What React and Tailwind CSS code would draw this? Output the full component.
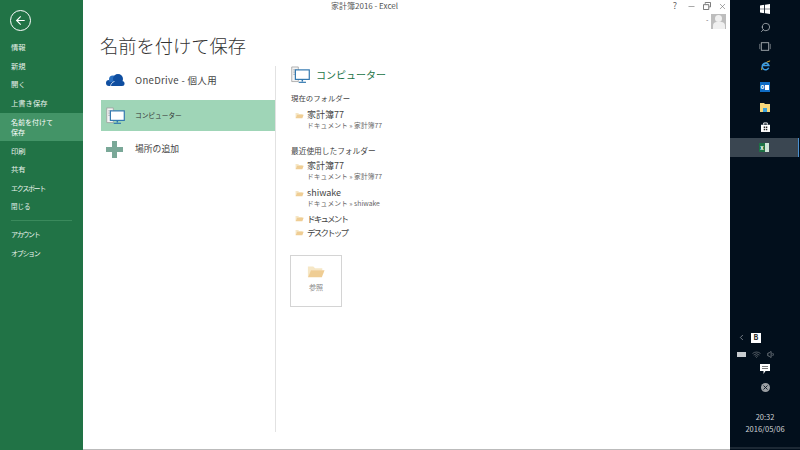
import { ArrowLeft, Search, X, Minus, ChevronLeft, Wifi, Volume1 } from "lucide-react";

const FONT = "font-['Noto_Sans_CJK_JP','Noto_Sans',sans-serif]";

const MENU_TOP = ["情報", "新規", "開く", "上書き保存"];
const KANA = "text-[7px] tracking-[-1.3px]";

function MenuItem({ children, className = "text-[7.3px]" }) {
  return (
    <div className={`flex h-[18.7px] items-center pl-[11px] text-[#e8f2ec] ${className}`}>
      {children}
    </div>
  );
}

function Folder({ className }) {
  return (
    <svg viewBox="0 0 20 16" className={className}>
      <path d="M1 14V2.500h6l2 2h8V7H5L1 14z" fill="#f6e7c6" />
      <path d="M1 14.500 4.500 6.500H19.500L16.500 14.500z" fill="#efcd94" />
    </svg>
  );
}

function Computer({ className }) {
  return (
    <svg viewBox="0 0 26 24" className={className}>
      <path d="M1 1h9v20H1z" fill="#f4f4f4" stroke="#9a9a9a" strokeWidth="1" />
      <path d="M3 5h5M3 8h5M3 11h5" stroke="#9a9a9a" strokeWidth="1" />
      <rect x="6" y="5" width="19" height="13" fill="#ffffff" stroke="#2f76ae" strokeWidth="1.6" />
      <path d="M15.500 18v3" stroke="#2f76ae" strokeWidth="2" />
      <path d="M10.500 22h10" stroke="#2f76ae" strokeWidth="1.6" />
    </svg>
  );
}

function RecentFolder({ name, path, nameClass = "text-[9px]", className = "" }) {
  return (
    <div className={`flex items-start gap-[3px] ${className}`}>
      <Folder className="mt-[3px] h-[7px] w-[9px] shrink-0" />
      <div>
        <div className={`leading-[12px] text-[#444] ${nameClass}`}>{name}</div>
        {path && <div className="text-[6.8px] leading-[9px] text-[#666]">{path}</div>}
      </div>
    </div>
  );
}

function Taskbar() {
  return (
    <div className="flex w-[70px] shrink-0 flex-col items-center bg-[#020f1c] text-white">
      <div className="flex w-full flex-col items-center">
        <svg viewBox="0 0 12 12" className="mt-[4px] h-[10px] w-[10px]">
          <path d="M0 1.700 5 1v4.600H0zM6 .8 12 0v5.600H6zM0 6.400h5V11l-5-.7zM6 6.400h6V12l-6-.8z" fill="#fff" />
        </svg>
        <Search className="mt-[8px] h-[11px] w-[11px] -scale-x-100 text-[#c8ccd0]" strokeWidth={1.5} />
        <svg viewBox="0 0 16 12" className="mt-[9px] h-[9px] w-[14px]">
          <rect x="3" y="1" width="10" height="10" fill="none" stroke="#c8ccd0" />
          <path d="M1 2.500v7M15 2.500v7" stroke="#8b9096" />
        </svg>
        <svg viewBox="0 0 12 12" className="mt-[9px] h-[11px] w-[11px]">
          <path d="M2 11C1 8 5 2.500 11 1" fill="none" stroke="#f2c230" strokeWidth="1" />
          <path d="M9.500 8.500A3.700 3.700 0 1 1 9.700 6H3" fill="none" stroke="#3c9ce0" strokeWidth="1.600" />
        </svg>
        <div className="mt-[11px] flex h-[10px] w-[10px] items-center bg-[#0f6cc4]">
          <div className="flex h-[10px] w-[5px] items-center justify-center text-[6px] font-bold leading-none">o</div>
          <div className="h-[5px] w-[4px] bg-white" />
        </div>
        <svg viewBox="0 0 10 9" className="mt-[11px] h-[9px] w-[10px]">
          <path d="M0 0h4l1 1h5v8H0z" fill="#f5d77c" />
          <path d="M3 5h4v4H3z" fill="#3aa0d8" />
        </svg>
        <svg viewBox="0 0 10 11" className="mt-[10px] h-[10px] w-[9px]">
          <path d="M0 3h10v8H0z" fill="#fff" />
          <path d="M3 3V1h4v2" fill="none" stroke="#fff" />
          <path d="M3 5h1.600v1.600H3zM5.400 5H7v1.600H5.400zM3 7.400h1.600V9H3zM5.400 7.400H7V9H5.400z" fill="#222" />
        </svg>
        <div className="mt-[6px] flex h-[19px] w-[69px] items-center justify-center self-start border-r border-r-[#4a90d0] bg-[#3a4651]">
          <div className="flex h-[9px] w-[10px] items-stretch">
            <div className="flex w-[6px] items-center justify-center bg-[#1e7145] text-[6px] font-bold leading-none">x</div>
            <div className="w-[4px] bg-[#cfe3d8]" />
          </div>
        </div>
      </div>
      <div className="flex-1" />
      <div className="flex w-full flex-col items-center pb-[13.5px]">
        <div className="flex w-full items-center gap-[5px] pl-[7px]">
          <ChevronLeft className="h-[9px] w-[9px] text-[#c8ccd0]" strokeWidth={1.5} />
          <div className="flex h-[10px] w-[10px] items-center justify-center bg-white text-[7px] font-bold leading-none text-[#222]">B</div>
        </div>
        <div className="mt-[7px] flex w-full items-center gap-[6px] pl-[7px]">
          <div className="h-[5px] w-[9px] bg-[#c8ccd0]" />
          <Wifi className="h-[9px] w-[9px] text-[#8b9096]" strokeWidth={1.5} />
          <Volume1 className="h-[9px] w-[9px] text-[#b5b9bd]" strokeWidth={1.5} />
        </div>
        <svg viewBox="0 0 10 11" className="mt-[5px] h-[11px] w-[10px]">
          <path d="M0 0h10v7H5.500L3.500 10V7H0z" fill="#fff" />
          <path d="M2 2.500h6M2 4.500h6" stroke="#444" strokeWidth=".7" />
        </svg>
        <div className="mt-[8px] flex h-[9px] w-[9px] items-center justify-center rounded-full bg-[#9a9ea2]">
          <X className="h-[7px] w-[7px] text-[#020f1c]" strokeWidth={3} />
        </div>
        <div className="mt-[19px] text-[7.5px] leading-[11px] text-[#d0d3d6]">20:32</div>
        <div className="mt-[1px] text-[7.5px] leading-[11px] text-[#d0d3d6]">2016/05/06</div>
      </div>
      <div className="h-[2px] w-full bg-[#1d2935]" />
      <div className="h-px w-full" />
    </div>
  );
}

export default function App() {
  return (
    <div className={`${FONT} flex h-[450px] w-[800px] overflow-hidden bg-white`}>
      {/* backstage menu */}
      <div className="flex w-[83px] shrink-0 flex-col bg-[#217346]">
        <div className="ml-[10px] mt-[10px] flex h-[21px] w-[21px] items-center justify-center rounded-full border-[1.5px] border-white">
          <ArrowLeft className="h-[13px] w-[13px] text-white" strokeWidth={2} />
        </div>
        <div className="mt-[7px]">
          {MENU_TOP.map((m) => (
            <MenuItem key={m}>{m}</MenuItem>
          ))}
        </div>
        <div className="mb-[0.7px] mt-[0.2px] flex h-[28px] flex-col justify-center bg-[#439467] pl-[11px] text-[7px] leading-[10px] text-white">
          <div>名前を付けて</div>
          <div>保存</div>
        </div>
        <MenuItem>印刷</MenuItem>
        <MenuItem>共有</MenuItem>
        <MenuItem className={KANA}>エクスポート</MenuItem>
        <MenuItem className="text-[6.5px]">閉じる</MenuItem>
        <div className="mx-[11px] my-[4px] h-px w-[61px] bg-[#3a8a5c]" />
        <MenuItem className={KANA}>アカウント</MenuItem>
        <MenuItem className={KANA}>オプション</MenuItem>
      </div>

      {/* main */}
      <div className="flex min-w-0 flex-1 flex-col">
        <div className="flex h-[14px] items-start">
          <div className="flex-1 pl-[248px] text-[8px] leading-[12px] text-[#555]">家計簿2016 - Excel</div>
          <div className="flex w-[64px] shrink-0 items-center pl-px pt-[1px] text-[#666]">
            <span className="w-[16px] text-center text-[9px] leading-[10px]">?</span>
            <div className="flex w-[16px] justify-center">
              <Minus className="h-[9px] w-[9px]" strokeWidth={1.5} />
            </div>
            <div className="flex w-[16px] justify-center">
              <svg viewBox="0 0 9 9" className="h-[8px] w-[8px]">
                <path d="M2.500 2V.5h6v5H7M.5 3h6v5.500h-6z" fill="none" stroke="#666" />
              </svg>
            </div>
            <div className="flex w-[15px] justify-center">
              <X className="h-[9px] w-[9px]" strokeWidth={1.5} />
            </div>
          </div>
        </div>
        <div className="flex h-[34px]">
          <div className="flex-1 pl-[17px] pt-[19px] text-[18.25px] font-light leading-[25px] text-[#333]">
            名前を付けて保存
          </div>
          <div className="flex w-[24px] shrink-0 items-start gap-[3px] pr-[4px]">
            <span className="mt-[1px] text-[7px] leading-[8px] text-[#666]">-</span>
            <div className="flex h-[15px] w-[15px] flex-col items-center overflow-hidden bg-[#bdbdbd] pt-[1px]">
              <div className="h-[7px] w-[7px] rounded-full bg-[#f0f0f0]" />
              <div className="h-[8px] w-[12px] rounded-t-[4px] bg-[#f0f0f0]" />
            </div>
          </div>
        </div>
        <div className="mt-[18px] flex flex-1 pl-[18px]">
          <div className="w-[174px] shrink-0">
            <div className="flex h-[34px] items-center pb-[6px]">
              <svg viewBox="0 0 20 12" className="ml-[4px] h-[12px] w-[20px]">
                <circle cx="4" cy="9" r="3" fill="#0f4ea0" />
                <circle cx="8" cy="5.500" r="4" fill="#2a6fc0" />
                <circle cx="13" cy="5" r="5" fill="#0f4ea0" />
                <circle cx="17" cy="9.500" r="2.500" fill="#0f4ea0" />
                <path d="M4 8h13v4H4z" fill="#0f4ea0" />
                <path d="M5.500 12C6 9.500 7.500 8 9.500 7.500" fill="none" stroke="#fff" strokeWidth=".7" />
              </svg>
              <span className="ml-[10px] text-[9.5px] tracking-[0.35px] text-[#444]">OneDrive - 個人用</span>
            </div>
            <div className="flex h-[31px] items-center bg-[#9fd5b7]">
              <Computer className="ml-[5px] h-[18px] w-[19px]" />
              <span className="ml-[10px] text-[6.7px] text-[#333]">コンピューター</span>
            </div>
            <div className="flex h-[36px] items-center">
              <svg viewBox="0 0 17 17" className="ml-[5px] h-[17px] w-[17px]">
                <path d="M6 0h5v6h6v5h-6v6H6v-6H0V6h6z" fill="#7aa898" />
              </svg>
              <span className="ml-[12px] text-[8.8px] text-[#444]">場所の追加</span>
            </div>
          </div>
          <div className="h-[366px] w-px shrink-0 bg-[#e2e2e2]" />

          <div className="pl-[15px]">
            <div className="flex items-center gap-[6px]">
              <Computer className="h-[18px] w-[19px]" />
              <span className="text-[10px] leading-[18px] text-[#217346]">コンピューター</span>
            </div>
            <div className="mt-[8px] text-[7.4px] leading-[12px] text-[#444]">現在のフォルダー</div>
            <div className="ml-[4px] mt-[5px]">
              <RecentFolder name="家計簿77" path="ドキュメント » 家計簿77" />
            </div>
            <div className="mt-[15px] text-[7.7px] leading-[12px] text-[#444]">最近使用したフォルダー</div>
            <div className="ml-[4px] mt-[3px] flex flex-col">
              <RecentFolder name="家計簿77" path="ドキュメント » 家計簿77" />
              <RecentFolder name="shiwake" path="ドキュメント » shiwake" className="mt-[6px]" />
              <RecentFolder name="ドキュメント" nameClass="text-[8.5px] tracking-[-1.8px]" className="mt-[4px]" />
              <RecentFolder name="デスクトップ" nameClass="text-[8.5px] tracking-[-1.8px]" className="mt-[2px]" />
            </div>
            <div className="-ml-px mt-[17px] flex h-[52px] w-[52px] flex-col items-center border border-[#d4d4d4] pt-[8px]">
              <Folder className="h-[15px] w-[18px]" />
              <span className="mt-[3px] text-[7px] leading-[10px] text-[#888]">参照</span>
            </div>
          </div>
        </div>
        <div className="h-px bg-[#bbbbbb]" />
      </div>

      <Taskbar />
    </div>
  );
}
